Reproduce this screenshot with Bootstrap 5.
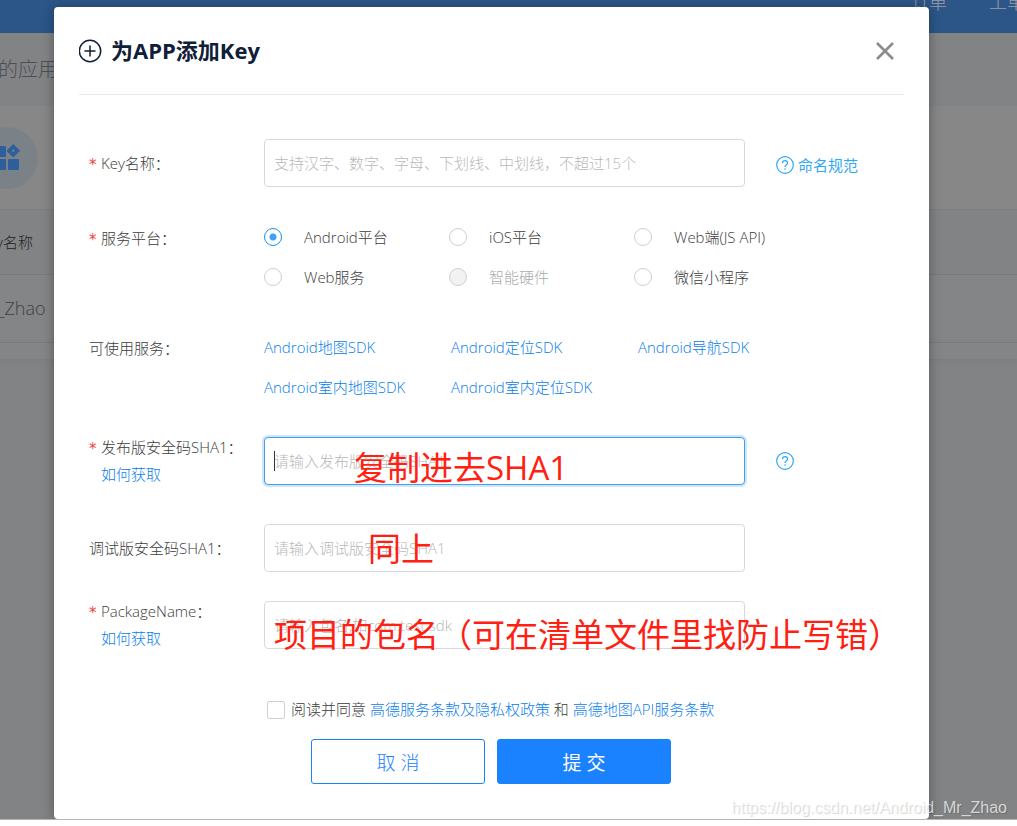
<!DOCTYPE html>
<html lang="zh-CN">
<head>
<meta charset="utf-8">
<meta name="viewport" content="width=device-width, initial-scale=1">
<title>为APP添加Key</title>
<link rel="stylesheet" href="https://cdn.jsdelivr.net/npm/bootstrap@5.3.0/dist/css/bootstrap.min.css">
<style>
  body { font: 300 15px/27px "Open Sans", "Noto Sans CJK SC", sans-serif; color: #3c3c3c; background: #fff; }
  a { color: #0a80ea; text-decoration: none; }
  .stage { background: #828385; border-bottom: 1px solid #b4b4b4; padding: 7px 88px 0 54px; }

  /* dimmed page behind the dialog */
  .behind { inset: 0; color: #4d5156; }
  .top-bar { height: 33px; background: #2b5687; color: #9a9da2; font-size: 18px; line-height: 4px; gap: 42px; margin-right: -8px; }
  .page-head { height: 73px; font-size: 20px; line-height: 73px; color: #4c5055; margin-left: -2px; }
  .app-strip { height: 103px; background: #878787; }
  .app-dot { width: 62px; height: 62px; margin: 21px 0 0 -24px; background: #7b8287; }
  .row-head { height: 65px; line-height: 65px; color: #222; border-top: 1px solid #7c7d7f; text-indent: -4px; }
  .row-line { height: 69px; line-height: 66px; font-size: 18px; color: #3e4145; background: #848587; border-top: 1px solid #797a7c; border-bottom: 1px solid #797a7c; text-indent: -3px; }
  .row-foot { height: 16px; background: #848587; box-shadow: 0 2px 4px #7c7d7f; }

  .key-dialog { background: #fff; border-radius: 4px; padding: 0 25px 35px; box-shadow: 0 2px 12px rgba(0,0,0,.35); }
  .dialog-head { height: 88px; border-bottom: 1px solid #e4eaf0; gap: 8px; }
  .dialog-head h1 { font-size: 22px; line-height: 30px; font-weight: 700; color: #0f2038; margin: 0 0 2px; }
  .close-x { border: 0; background: none; padding: 0; width: 20px; height: 20px; line-height: 0; margin-right: 9px; }

  .field-row { display: grid; grid-template-columns: 175px minmax(0,1fr) 159px; align-items: center; padding-left: 10px; }
  .row-name { margin-top: 44px; }
  .row-platform, .row-service { margin-top: 30px; }
  .row-sha { margin-top: 27px; }
  .row-debug { margin-top: 36px; }
  .row-package { margin-top: 26px; }
  .help { padding-left: 31px; color: #2fa8f5; gap: 4px; white-space: nowrap; font-weight: 400; }
  .need { position: relative; padding-left: 12px; }
  .need::before { content: "*"; position: absolute; left: 0; top: 2px; color: #f0443a; font: 400 15px/27px "DejaVu Sans", sans-serif; }
  .form-control { height: 48px; border: 1px solid #d9d9d9; border-radius: 4px; padding: 0 9px; font-size: 15px; font-weight: 300; }
  .form-control::placeholder { color: #b8b8b8; opacity: 1; }
  .form-control.active { border-color: #40a0ee; box-shadow: 0 0 0 2px #d0e7fb; }
  .caret { left: 10px; top: 14px; width: 1px; height: 20px; background: #333; }
  .note { color: #ff2012; font-size: 33px; line-height: 40px; font-weight: 400; white-space: nowrap; pointer-events: none; }
  .note-a { left: 90px; top: 11px; }
  .note-b { left: 104px; top: 5px; }
  .note-c { left: 10px; top: 14px; }

  .wide { grid-column: 2 / 4; display: grid; grid-template-columns: repeat(3, 185px); line-height: 40px; }
  .wide.links { grid-template-columns: repeat(3, 187px); white-space: nowrap; }
  .pick { gap: 22px; }
  .form-check-input { margin: 0; flex: none; width: 18px; height: 18px; border: 1px solid #d0d0d0; background-color: #fff; }
  .form-check-input[type=checkbox] { border-radius: 2px; }
  .form-check-input:checked { background-color: #fff; border-color: #1a8ff0; }
  .form-check-input:checked[type=radio] { background-image: radial-gradient(circle, #40a0f5 3px, #fff 4px); }
  .form-check-input:disabled { background-color: #f2f2f2; opacity: 1; }
  .pick .form-check-input:disabled ~ label { color: #aaa; opacity: 1; }
  .agree { padding-left: 188px; gap: 6px; margin-top: 44px; }
  .actions { padding-left: 232px; gap: 12px; margin-top: 16px; }
  .actions .btn { width: 174px; height: 45px; border-radius: 3px; font-size: 19px; font-weight: 300; padding: 3px 0 0; border: 1px solid #1a82ff; color: #1a82ff; }
  .actions .btn.go { background: #1a82ff; color: #fff; font-weight: 400; }
  .site-mark { right: 10px; bottom: -2px; font: 400 16px/27px "Liberation Sans", sans-serif; color: rgba(255,255,255,.7); text-shadow: 1px 1px 1px rgba(0,0,0,.18); }
</style>
</head>
<body>
<div class="stage position-relative overflow-hidden">
  <div class="behind position-absolute">
    <div class="top-bar d-flex justify-content-end"><span>订单</span><span>工单</span></div>
    <div class="page-head">的应用</div>
    <div class="app-strip d-flex">
      <div class="app-dot rounded-circle">
        <svg width="62" height="62" viewBox="0 0 62 62" fill="#2d5f9c">
          <rect x="18" y="19" width="12" height="11" rx="1"/><rect x="18" y="32" width="12" height="11" rx="1"/><rect x="32" y="32" width="11" height="11" rx="1"/>
          <path fill-rule="evenodd" stroke="#2d5f9c" stroke-linejoin="round" d="M37.300 17.500l6.300 6.300-6.300 6.300-6.300-6.300zM37.300 21.800l-2 2 2 2 2-2z"/>
        </svg>
      </div>
    </div>
    <div class="row-head">y名称</div>
    <div class="row-line">_Zhao</div>
    <div class="row-foot"></div>
  </div>

  <form class="key-dialog position-relative">
    <div class="dialog-head d-flex align-items-center">
      <svg width="24" height="24" viewBox="0 0 24 24" fill="none" stroke="#0f2038" stroke-width="1.500"><circle cx="11" cy="12" r="10.700"/><path d="M5.500 12h11M11 6.500v11"/></svg>
      <h1>为APP添加Key</h1>
      <button type="button" class="close-x ms-auto" aria-label="关闭"><svg width="20" height="20" viewBox="0 0 20 20" stroke="#8b8b8b" stroke-width="2.600"><path d="M2 2l16 16M18 2L2 18"/></svg></button>
    </div>

    <div class="field-row row-name">
      <label class="need" for="keyName">Key名称：</label>
      <input id="keyName" class="form-control" placeholder="支持汉字、数字、字母、下划线、中划线，不超过15个">
      <a href="#" class="help d-flex align-items-center pt-1"><svg width="18" height="18" viewBox="0 0 18 18" fill="none" stroke="#2fa8f5" stroke-width="1.200"><circle cx="9" cy="9" r="8.300"/><path d="M6.400 7.200c0-1.700 1.100-2.600 2.600-2.600s2.600.9 2.600 2.300c0 1.800-2.600 1.900-2.600 4M9 12.300v1.400"/></svg>命名规范</a>
    </div>

    <div class="field-row row-platform">
      <div class="need align-self-start mt-2" id="pfLabel">服务平台：</div>
      <div class="wide" role="radiogroup" aria-labelledby="pfLabel">
        <div class="pick d-flex align-items-center"><input class="form-check-input" type="radio" name="pf" id="p1" checked><label for="p1">Android平台</label></div>
        <div class="pick d-flex align-items-center"><input class="form-check-input" type="radio" name="pf" id="p2"><label for="p2">iOS平台</label></div>
        <div class="pick d-flex align-items-center"><input class="form-check-input" type="radio" name="pf" id="p3"><label for="p3">Web端(JS API)</label></div>
        <div class="pick d-flex align-items-center"><input class="form-check-input" type="radio" name="pf" id="p4"><label for="p4">Web服务</label></div>
        <div class="pick d-flex align-items-center"><input class="form-check-input" type="radio" name="pf" id="p5" disabled><label for="p5">智能硬件</label></div>
        <div class="pick d-flex align-items-center"><input class="form-check-input" type="radio" name="pf" id="p6"><label for="p6">微信小程序</label></div>
      </div>
    </div>

    <div class="field-row row-service">
      <div class="align-self-start mt-2">可使用服务：</div>
      <div class="wide links">
        <a href="#">Android地图SDK</a><a href="#">Android定位SDK</a><a href="#">Android导航SDK</a>
        <a href="#">Android室内地图SDK</a><a href="#">Android室内定位SDK</a>
      </div>
    </div>

    <div class="field-row row-sha">
      <div class="need"><label for="sha">发布版安全码SHA1：</label><br><a href="#">如何获取</a></div>
      <div class="position-relative">
        <input id="sha" class="form-control active" placeholder="请输入发布版安全码SHA1">
        <span class="caret position-absolute"></span><span class="note note-a position-absolute">复制进去SHA1</span>
      </div>
      <a href="#" class="help d-flex" aria-label="帮助"><svg width="18" height="18" viewBox="0 0 18 18" fill="none" stroke="#2fa8f5" stroke-width="1.200"><circle cx="9" cy="9" r="8.300"/><path d="M6.400 7.200c0-1.700 1.100-2.600 2.600-2.600s2.600.9 2.600 2.300c0 1.800-2.600 1.900-2.600 4M9 12.300v1.400"/></svg></a>
    </div>

    <div class="field-row row-debug">
      <label for="shaDebug">调试版安全码SHA1：</label>
      <div class="position-relative">
        <input id="shaDebug" class="form-control" placeholder="请输入调试版安全码SHA1">
        <span class="note note-b position-absolute">同上</span>
      </div>
    </div>

    <div class="field-row row-package">
      <div class="need"><label for="pkg">PackageName：</label><br><a href="#">如何获取</a></div>
      <div class="position-relative">
        <input id="pkg" class="form-control" placeholder="请输入包名,如com.test.sdk">
        <span class="note note-c position-absolute">项目的包名（可在清单文件里找防止写错）</span>
      </div>
    </div>

    <div class="agree d-flex align-items-center">
      <input class="form-check-input" type="checkbox" id="ok">
      <span><label for="ok">阅读并同意</label> <a href="#">高德服务条款及隐私权政策</a> 和 <a href="#">高德地图API服务条款</a></span>
    </div>
    <div class="actions d-flex">
      <button type="button" class="btn">取 消</button>
      <button type="submit" class="btn go">提 交</button>
    </div>
  </form>
  <div class="site-mark position-absolute">https://blog.csdn.net/Android_Mr_Zhao</div>
</div>
<script src="https://cdn.jsdelivr.net/npm/bootstrap@5.3.0/dist/js/bootstrap.bundle.min.js"></script>
</body>
</html>
